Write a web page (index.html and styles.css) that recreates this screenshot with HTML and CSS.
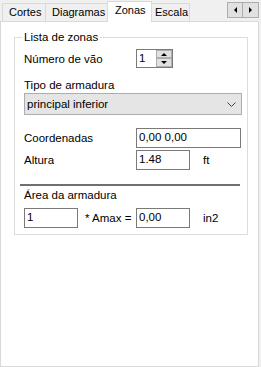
FILE: index.html
```html
<!DOCTYPE html>
<html lang="pt">
<head>
    <meta charset="UTF-8">
    <title>Zonas</title>
    <link rel="stylesheet" href="styles.css">
</head>
<body>

<div class="tabbar">
    <div class="tab tab-cortes">Cortes</div>
    <div class="tab tab-diagramas">Diagramas</div>
    <div class="tab tab-zonas active">Zonas</div>
    <div class="tab tab-escala">Escala</div>
    <div class="scroller">
        <span class="scroll-btn"><span class="tri-left"></span></span>
        <span class="scroll-btn"><span class="tri-right"></span></span>
    </div>
</div>

<div class="page">
    <div class="group">
        <span class="legend">Lista de zonas</span>

        <div class="row">
            <span class="label">Número de vão</span>
            <div class="spinner">
                <span class="spin-value">1</span>
                <div class="spin-buttons">
                    <span class="spin-btn"><span class="tri-up"></span></span>
                    <span class="spin-btn"><span class="tri-down"></span></span>
                </div>
            </div>
        </div>

        <div class="caption">Tipo de armadura</div>
        <div class="combo">
            <span>principal inferior</span>
            <svg class="chevron" width="9" height="5" viewBox="0 0 9 5">
                <path d="M0.5 0.5 L4.5 4.5 L8.5 0.5" fill="none" stroke="#444" stroke-width="1"/>
            </svg>
        </div>

        <div class="row row-coord">
            <span class="label">Coordenadas</span>
            <div class="textbox wide">0,00 0,00</div>
        </div>
        <div class="row row-height">
            <span class="label">Altura</span>
            <div class="textbox">1.48</div>
            <span class="unit">ft</span>
        </div>

        <div class="separator"></div>

        <div class="caption caption-area">Área da armadura</div>
        <div class="row row-area">
            <div class="textbox">1</div>
            <span class="amax">* Amax =</span>
            <div class="textbox">0,00</div>
            <span class="unit">in2</span>
        </div>
    </div>
</div>

</body>
</html>
```

FILE: styles.css
```css
body {
    margin: 0;
    width: 261px;
    height: 367px;
    background-color: #f0f0f0;
    font-family: "Liberation Sans", Arial, sans-serif;
    font-size: 11.5px;
    color: #000;
    overflow: hidden;
}
.tabbar {
    display: flex;
    align-items: flex-end;
    height: 21px;
    padding-left: 2px;
    position: relative;
    z-index: 1;
    font-size: 11px;
}
.tab {
    box-sizing: border-box;
    height: 18px;
    padding-left: 6px;
    line-height: 17px;
    border: 1px solid #d9d9d9;
    border-bottom: none;
    border-right: none;
    background-color: #f0f0f0;
    white-space: nowrap;
}
.tab-cortes {
    width: 43px;
}
.tab-diagramas {
    width: 62px;
}
.tab-escala {
    width: 39px;
    padding-left: 4px;
    border-right: 1px solid #d9d9d9;
    border-left: none;
}
.tab.active {
    width: 45px;
    height: 21px;
    line-height: 16px;
    margin-right: -1px;
    padding-left: 7px;
    background-color: #fff;
    border: 1px solid #d9d9d9;
    border-bottom: none;
    position: relative;
    top: 1px;
}
.scroller {
    margin-left: auto;
    margin-right: 2px;
    margin-bottom: 3px;
    display: flex;
}
.scroll-btn {
    box-sizing: border-box;
    width: 16px;
    height: 16px;
    border: 1px solid #adadad;
    background-color: #e1e1e1;
    display: flex;
    align-items: center;
    justify-content: center;
}
.scroll-btn + .scroll-btn {
    border-left: none;
}
.tri-left, .tri-right, .tri-up, .tri-down {
    width: 0;
    height: 0;
    border: 0 solid transparent;
}
.tri-left {
    border-width: 3px 3px 3px 0;
    border-right-color: #000;
}
.tri-right {
    border-width: 3px 0 3px 3px;
    border-left-color: #000;
}
.tri-up {
    border-width: 0 3px 3px 3px;
    border-bottom-color: #000;
}
.tri-down {
    border-width: 3px 3px 0 3px;
    border-top-color: #000;
}
.page {
    box-sizing: border-box;
    width: 259px;
    height: 346px;
    background-color: #fff;
    border: 1px solid #d9d9d9;
    padding-top: 15px;
}
.group {
    position: relative;
    box-sizing: border-box;
    width: 234px;
    margin-left: 13px;
    border: 1px solid #dcdcdc;
    padding: 11px 0 6px 9px;
}
.legend {
    position: absolute;
    top: -8px;
    left: 7px;
    padding: 0 2px;
    background-color: #fff;
    line-height: 15px;
}
.row {
    display: flex;
    align-items: center;
    height: 19px;
}
.label {
    width: 112px;
}
.spinner {
    box-sizing: border-box;
    width: 37px;
    height: 19px;
    border: 1px solid #7a7a7a;
    display: flex;
}
.spin-value {
    flex: 1;
    padding-left: 2px;
    line-height: 17px;
}
.spin-buttons {
    display: flex;
    flex-direction: column;
    width: 16px;
}
.spin-btn {
    box-sizing: border-box;
    height: 8px;
    border: 1px solid #adadad;
    background-color: #e1e1e1;
    display: flex;
    align-items: center;
    justify-content: center;
}
.spin-btn + .spin-btn {
    height: 9px;
}
.caption {
    margin-top: 10px;
    line-height: 15px;
}
.combo {
    box-sizing: border-box;
    width: 218px;
    height: 22px;
    border: 1px solid #adadad;
    background-color: #e5e5e5;
    display: flex;
    align-items: center;
    justify-content: space-between;
    padding: 0 5px 0 2px;
}
.chevron {
    display: block;
}
.textbox {
    box-sizing: border-box;
    width: 54px;
    height: 20px;
    border: 1px solid #7a7a7a;
    padding-left: 2px;
    line-height: 17px;
}
.textbox.wide {
    width: 105px;
}
.row-coord {
    margin-top: 13px;
    height: 20px;
}
.row-height {
    margin-top: 2px;
    height: 20px;
}
.unit {
    margin-left: 13px;
}
.separator {
    margin: 14px 0 0 -4px;
    width: 220px;
    height: 2px;
    background-color: #707070;
}
.caption-area {
    margin-top: 2px;
}
.row-area {
    margin-top: 5px;
    height: 20px;
}
.amax {
    width: 51px;
    margin-left: 7px;
}
```
